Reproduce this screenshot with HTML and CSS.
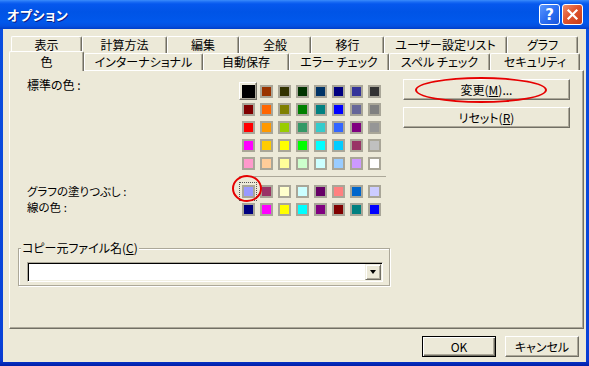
FILE: index.html
```html
<!DOCTYPE html>
<html lang="ja">
<head>
<meta charset="utf-8">
<title>オプション</title>
<link rel="stylesheet" href="styles.css">
</head>
<body>
<div class="window">
  <div class="titlebar">
    <span class="title">オプション</span>
    <span class="tbtn help">?</span>
    <span class="tbtn close"><svg width="13" height="13" viewBox="0 0 13 13"><path d="M2.5 2.5L10.5 10.5M10.5 2.5L2.5 10.5" stroke="#fff" stroke-width="2.2" stroke-linecap="square"/></svg></span>
  </div>
  <div class="client">
    <div class="tabrow back">
      <div class="tab">表示</div>
      <div class="tab">計算方法</div>
      <div class="tab">編集</div>
      <div class="tab">全般</div>
      <div class="tab">移行</div>
      <div class="tab">ユーザー設定リスト</div>
      <div class="tab">グラフ</div>
    </div>
    <div class="tabrow front">
      <div class="tab selected">色</div>
      <div class="tab">インターナショナル</div>
      <div class="tab">自動保存</div>
      <div class="tab">エラー チェック</div>
      <div class="tab">スペル チェック</div>
      <div class="tab">セキュリティ</div>
    </div>
    <div class="panel">
      <div class="top">
        <div class="labels">
          <div class="lbl">標準の色 :</div>
          <div class="lbl fill">グラフの塗りつぶし :</div>
          <div class="lbl line">線の色 :</div>
        </div>
        <div class="palette">
          <div class="grid">
            <span class="sw sel" style="background:#000000"></span>
            <span class="sw" style="background:#993300"></span>
            <span class="sw" style="background:#333300"></span>
            <span class="sw" style="background:#003300"></span>
            <span class="sw" style="background:#003366"></span>
            <span class="sw" style="background:#000080"></span>
            <span class="sw" style="background:#333399"></span>
            <span class="sw" style="background:#333333"></span>
            <span class="sw" style="background:#800000"></span>
            <span class="sw" style="background:#FF6600"></span>
            <span class="sw" style="background:#808000"></span>
            <span class="sw" style="background:#008000"></span>
            <span class="sw" style="background:#008080"></span>
            <span class="sw" style="background:#0000FF"></span>
            <span class="sw" style="background:#666699"></span>
            <span class="sw" style="background:#808080"></span>
            <span class="sw" style="background:#FF0000"></span>
            <span class="sw" style="background:#FF9900"></span>
            <span class="sw" style="background:#99CC00"></span>
            <span class="sw" style="background:#339966"></span>
            <span class="sw" style="background:#33CCCC"></span>
            <span class="sw" style="background:#3366FF"></span>
            <span class="sw" style="background:#800080"></span>
            <span class="sw" style="background:#969696"></span>
            <span class="sw" style="background:#FF00FF"></span>
            <span class="sw" style="background:#FFCC00"></span>
            <span class="sw" style="background:#FFFF00"></span>
            <span class="sw" style="background:#00FF00"></span>
            <span class="sw" style="background:#00FFFF"></span>
            <span class="sw" style="background:#00CCFF"></span>
            <span class="sw" style="background:#993366"></span>
            <span class="sw" style="background:#C0C0C0"></span>
            <span class="sw" style="background:#FF99CC"></span>
            <span class="sw" style="background:#FFCC99"></span>
            <span class="sw" style="background:#FFFF99"></span>
            <span class="sw" style="background:#CCFFCC"></span>
            <span class="sw" style="background:#CCFFFF"></span>
            <span class="sw" style="background:#99CCFF"></span>
            <span class="sw" style="background:#CC99FF"></span>
            <span class="sw" style="background:#FFFFFF"></span>
          </div>
          <div class="sep"></div>
          <div class="grid">
            <span class="sw focus" style="background:#9999FF"></span>
            <span class="sw" style="background:#993366"></span>
            <span class="sw" style="background:#FFFFCC"></span>
            <span class="sw" style="background:#CCFFFF"></span>
            <span class="sw" style="background:#660066"></span>
            <span class="sw" style="background:#FF8080"></span>
            <span class="sw" style="background:#0066CC"></span>
            <span class="sw" style="background:#CCCCFF"></span>
            <span class="sw" style="background:#000080"></span>
            <span class="sw" style="background:#FF00FF"></span>
            <span class="sw" style="background:#FFFF00"></span>
            <span class="sw" style="background:#00FFFF"></span>
            <span class="sw" style="background:#800080"></span>
            <span class="sw" style="background:#800000"></span>
            <span class="sw" style="background:#008080"></span>
            <span class="sw" style="background:#0000FF"></span>
          </div>
        </div>
        <div class="actions">
          <div class="btn">変更(<u>M</u>)...</div>
          <div class="btn">リセット(<u>R</u>)</div>
        </div>
      </div>
      <fieldset class="group">
        <legend>コピー元ファイル名(<u>C</u>)</legend>
        <div class="combo"><span class="drop"><span class="arrow"></span></span></div>
      </fieldset>
    </div>
    <div class="footer">
      <div class="btn ok">OK</div>
      <div class="btn cancel">キャンセル</div>
    </div>
  </div>
  <div class="mark mark-btn"></div>
  <div class="mark mark-sw"></div>
</div>
</body>
</html>
```
FILE: styles.css
```css
* { box-sizing: border-box; }
html, body { margin: 0; padding: 0; }
body {
  width: 589px;
  height: 366px;
  overflow: hidden;
  background: #ece9d8;
  color: #000;
  font-family: "Noto Sans CJK JP", "Noto Sans", sans-serif;
  font-size: 12px;
  font-feature-settings: "palt";
}
.window {
  position: relative;
  width: 589px;
  height: 366px;
  display: flex;
  flex-direction: column;
  background: linear-gradient(to bottom, #0a4fe0 0, #0842d8 340px, #0a3ad0 360px, #001ea8 366px);
}
.titlebar {
  flex: none;
  height: 29px;
  display: flex;
  align-items: center;
  padding: 0 6px 0 7px;
  background: linear-gradient(to bottom, #3b8cfb 0, #1a6cf4 2px, #0658ee 4px, #0054e6 12px, #0158ec 22px, #0450e0 26px, #003ec9 29px);
}
.title {
  flex: 1;
  color: #fff;
  font-weight: bold;
  font-size: 13px;
  letter-spacing: 0.5px;
  text-shadow: 1px 1px 0 #0a1d84;
}
.tbtn {
  width: 21px;
  height: 21px;
  border: 1px solid #fff;
  border-radius: 3px;
  display: flex;
  align-items: center;
  justify-content: center;
  color: #fff;
}
.help {
  background: linear-gradient(135deg, #5a98ff 0, #2d6ff2 50%, #1a55dc 100%);
  font-family: "DejaVu Sans", sans-serif;
  font-weight: bold;
  font-size: 15px;
  margin-right: 2px;
}
.close {
  background: linear-gradient(135deg, #f08d6c 0, #e0542e 45%, #c83c18 100%);
}
.client {
  flex: 1;
  margin: 0 3px 4px 3px;
  background: #ece9d8;
  padding: 7px 0 0 6px;
  display: flex;
  flex-direction: column;
}
.tabrow {
  display: flex;
  height: 17px;
  align-items: flex-end;
}
.tabrow.back { margin-left: 2px; }
.tab {
  height: 17px;
  flex: none;
  text-align: center;
  line-height: 16px;
  background: #ece9d8;
  border-top: 1px solid #fff;
  border-left: 1px solid #fff;
  border-right: 1px solid #716f64;
  box-shadow: inset -1px 0 0 #aca899;
  border-radius: 2px 2px 0 0;
  white-space: nowrap;
}
.back .tab:nth-child(1) { width: 71px; }
.back .tab:nth-child(2) { width: 85px; }
.back .tab:nth-child(3) { width: 72px; }
.back .tab:nth-child(4) { width: 72px; }
.back .tab:nth-child(5) { width: 73px; }
.back .tab:nth-child(6) { width: 123px; }
.back .tab:nth-child(7) { width: 71px; }
.front .tab:nth-child(1) { width: 75px; }
.front .tab:nth-child(2) { width: 119px; }
.front .tab:nth-child(3) { width: 86px; }
.front .tab:nth-child(4) { width: 100px; }
.front .tab:nth-child(5) { width: 101px; }
.front .tab:nth-child(6) { width: 90px; }
.tab.selected {
  height: 20px;
  margin-bottom: -1px;
  line-height: 20px;
  position: relative;
  z-index: 1;
}
.panel {
  width: 575px;
  height: 259px;
  flex: none;
  border-top: 1px solid #fff;
  border-left: 1px solid #fff;
  border-right: 1px solid #716f64;
  border-bottom: 1px solid #716f64;
  box-shadow: inset -1px -1px 0 #aca899;
  padding-top: 8px;
  display: flex;
  flex-direction: column;
}
.top { display: flex; }
.labels {
  width: 232px;
  padding-left: 17px;
  display: flex;
  flex-direction: column;
}
.lbl { line-height: 12px; white-space: nowrap; }
.lbl.fill, .lbl.line { font-size: 11.5px; line-height: 16px; }
.lbl.fill { margin-top: 92px; }
.palette {
  width: 144px;
  padding-top: 6px;
}
.grid {
  display: grid;
  grid-template-columns: repeat(8, 13px);
  grid-auto-rows: 13px;
  gap: 5px;
}
.sw {
  position: relative;
  display: block;
  width: 13px;
  height: 13px;
  border: 2px solid #a9a698;
}
.sw.sel { border: 1px solid #000; }
.sw.sel::before {
  content: "";
  position: absolute;
  left: -4px;
  top: -4px;
  right: -3px;
  bottom: -3px;
  border-top: 1px solid #fff;
  border-left: 1px solid #fff;
  border-right: 1px solid #716f64;
  border-bottom: 1px solid #716f64;
  box-shadow: inset -1px -1px 0 #aca899;
}
.sw.focus::before {
  content: "";
  position: absolute;
  left: -5px;
  top: -5px;
  right: -4px;
  bottom: -5px;
  border: 1px dotted #555;
}
.sep {
  margin: 6px 0 8px -3px;
  width: 147px;
  height: 1px;
  background: #aca899;
}
.actions {
  margin-left: 17px;
  width: 167px;
  display: flex;
  flex-direction: column;
  gap: 7px;
}
.btn {
  height: 21px;
  display: flex;
  align-items: center;
  justify-content: center;
  background: #ece9d8;
  border-top: 1px solid #fff;
  border-left: 1px solid #fff;
  border-right: 1px solid #716f64;
  border-bottom: 1px solid #716f64;
  box-shadow: inset -1px -1px 0 #aca899;
  white-space: nowrap;
}
.btn u, legend u { text-underline-offset: 1px; }
.group {
  margin: 26px 0 0 8px;
  width: 372px;
  padding: 8px 6px 3px 8px;
  border: 1px solid #aca899;
  box-shadow: inset 1px 1px 0 #fff, 1px 1px 0 #fff;
  min-inline-size: 0;
}
.group legend {
  margin-left: -6px;
  padding: 0 1px;
  line-height: 12px;
  background: #ece9d8;
}
.combo {
  width: 356px;
  height: 20px;
  background: #fff;
  border-top: 1px solid #aca899;
  border-left: 1px solid #aca899;
  border-right: 1px solid #fff;
  border-bottom: 1px solid #fff;
  box-shadow: inset 1px 1px 0 #000, inset -1px -1px 0 #f1efe2;
  display: flex;
  justify-content: flex-end;
  align-items: center;
  padding-right: 1px;
}
.drop {
  width: 16px;
  height: 16px;
  background: #ece9d8;
  border-top: 1px solid #f1efe2;
  border-left: 1px solid #f1efe2;
  border-right: 1px solid #716f64;
  border-bottom: 1px solid #716f64;
  box-shadow: inset 1px 1px 0 #fff, inset -1px -1px 0 #aca899;
  display: flex;
  align-items: center;
  justify-content: center;
}
.arrow {
  width: 0;
  height: 0;
  border-left: 3.5px solid transparent;
  border-right: 3.5px solid transparent;
  border-top: 4px solid #000;
}
.footer {
  margin-top: 7px;
  margin-right: 7px;
  display: flex;
  justify-content: flex-end;
  gap: 9px;
}
.footer .btn { width: 74px; }
.btn.ok {
  border: 1px solid #000;
  box-shadow: inset 1px 1px 0 #fff, inset -1px -1px 0 #716f64, inset -2px -2px 0 #aca899;
}
.mark {
  position: absolute;
  border: 2px solid #e60000;
  border-radius: 50%;
  pointer-events: none;
}
.mark-btn { left: 415px; top: 77px; width: 132px; height: 26px; }
.mark-sw { left: 232px; top: 175px; width: 30px; height: 27px; }
```
